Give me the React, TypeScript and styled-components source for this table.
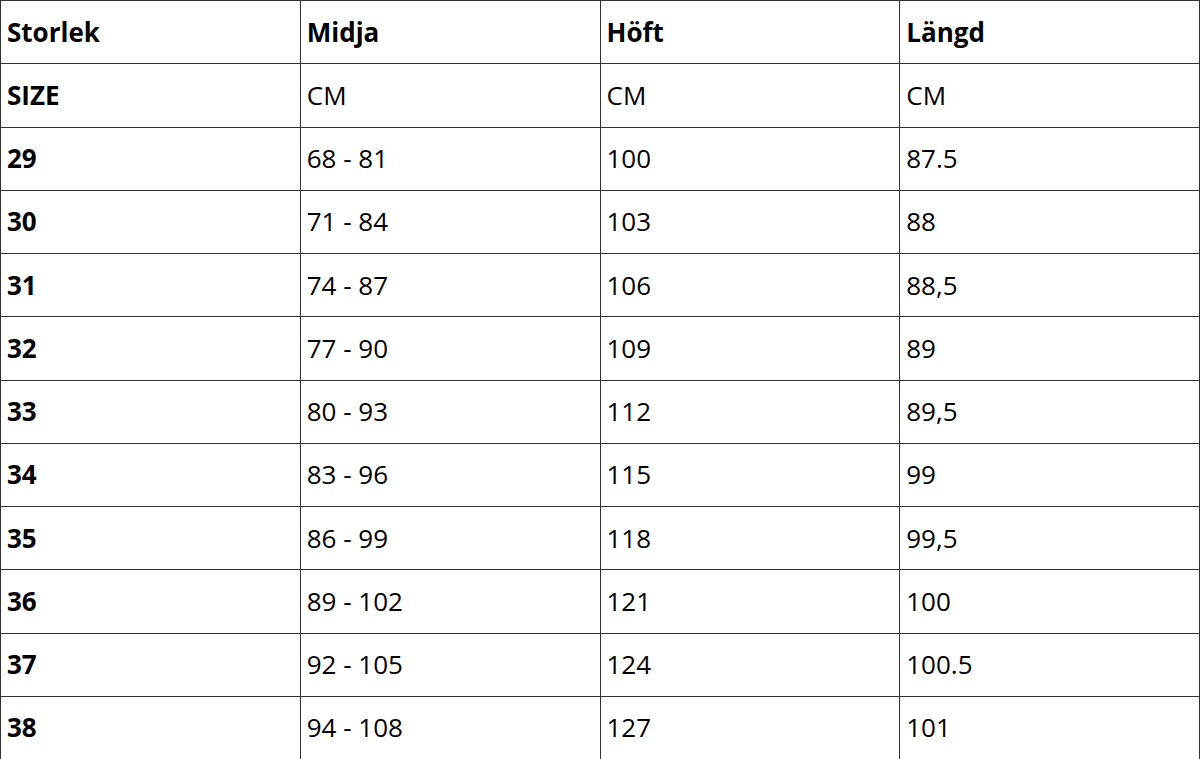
import styled, { createGlobalStyle } from 'styled-components';

const GlobalStyle = createGlobalStyle`
    html, body {
        margin: 0;
        padding: 0;
        background: #ffffff;
    }
    body {
        font-family: 'Open Sans', 'Noto Sans', sans-serif;
        color: #000000;
    }
`;

const headers = ['Storlek', 'Midja', 'Höft', 'Längd'];

const rows: [string, string, string, string][] = [
    ['SIZE', 'CM', 'CM', 'CM'],
    ['29', '68 - 81', '100', '87.5'],
    ['30', '71 - 84', '103', '88'],
    ['31', '74 - 87', '106', '88,5'],
    ['32', '77 - 90', '109', '89'],
    ['33', '80 - 93', '112', '89,5'],
    ['34', '83 - 96', '115', '99'],
    ['35', '86 - 99', '118', '99,5'],
    ['36', '89 - 102', '121', '100'],
    ['37', '92 - 105', '124', '100.5'],
    ['38', '94 - 108', '127', '101'],
];

const App = () => {
    return (
        <>
            <GlobalStyle />
            <SizeTable>
                <tbody>
                    <Row>
                        {headers.map((h) => (
                            <Cell key={h} $bold>
                                {h}
                            </Cell>
                        ))}
                    </Row>
                    {rows.map((row) => (
                        <Row key={row[0]}>
                            {row.map((value, i) => (
                                <Cell key={i} $bold={i === 0}>
                                    {value}
                                </Cell>
                            ))}
                        </Row>
                    ))}
                </tbody>
            </SizeTable>
        </>
    );
};

export default App;

const SizeTable = styled.table`
    width: 1200px;
    height: 759px;
    border-collapse: collapse;
    table-layout: fixed;
`;

const Row = styled.tr`
    height: 63.25px;
`;

const Cell = styled.td<{ $bold?: boolean }>`
    border: 1px solid #333333;
    padding: 0 5px 1px 6px;
    font-size: 26px;
    line-height: 1;
    font-weight: ${({ $bold }) => ($bold ? 700 : 400)};
    vertical-align: middle;
    text-align: left;
`;
